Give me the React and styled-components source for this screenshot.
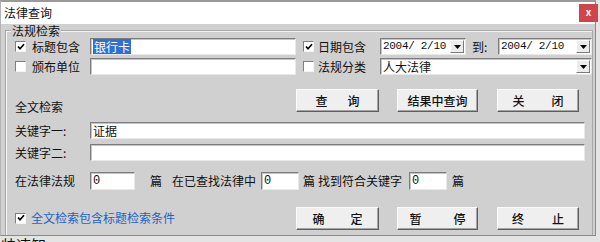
import React from 'react';
import styled, { createGlobalStyle } from 'styled-components';

const GlobalStyle = createGlobalStyle`
  html, body {
    margin: 0;
    padding: 0;
    background: #ffffff;
    width: 600px;
    height: 242px;
    overflow: hidden;
  }
  body {
    font-family: "Noto Sans CJK SC", "Noto Sans", sans-serif;
    font-size: 12px;
    color: #111;
  }
`;

const Page = styled.div`
  width: 600px;
  height: 242px;
  background: #e4e4e4;
  position: relative;
  overflow: hidden;
`;

const Window = styled.div`
  width: 596px;
  height: 236px;
  box-sizing: border-box;
  border-top: 2px solid #9a9a9a;
  border-left: 1px solid #b4b4b4;
  border-right: 1px solid #8a8a8a;
  border-bottom: 1px solid #8a8a8a;
  background: #d0d0d0;
  display: flex;
  flex-direction: column;
`;

const TitleBar = styled.div`
  height: 22px;
  flex: 0 0 22px;
  background: #fff;
  display: flex;
  align-items: center;
  justify-content: space-between;
  padding: 0 0 0 3px;
  font-size: 12px;
  line-height: 22px;
`;

const CloseButton = styled.div`
  width: 19px;
  height: 18px;
  margin-right: -3px;
  background: #d0454a;
  color: #fff;
  font-family: "Liberation Sans", sans-serif;
  font-size: 10px;
  font-weight: bold;
  display: flex;
  align-items: center;
  justify-content: center;
  line-height: 1;
`;

const Body = styled.div`
  flex: 1;
  padding: 6px 2px 0 4px;
  display: flex;
  flex-direction: column;
`;

const GroupBox = styled.div`
  border-top: 1px solid #a8a8a8;
  border-left: 1px solid #a8a8a8;
  border-right: 1px solid #a8a8a8;
  box-shadow: inset 1px 1px 0 #f4f4f4;
  flex: 1;
  padding: 0 0 0 9px;
  display: flex;
  flex-direction: column;
`;

const Legend = styled.div`
  margin: -7px 0 0 -4px;
  padding: 0 1px;
  align-self: flex-start;
  background: #d0d0d0;
  font-size: 12px;
  line-height: 14px;
  height: 14px;
`;

const Row = styled.div`
  display: flex;
  align-items: ${(p) => p.$align || 'center'};
  height: ${(p) => p.$h}px;
  margin-top: ${(p) => p.$mt || 0}px;
`;

const Label = styled.span`
  width: ${(p) => (p.$w ? `${p.$w}px` : 'auto')};
  margin-left: ${(p) => p.$ml || 0}px;
  flex: 0 0 auto;
  white-space: nowrap;
  color: ${(p) => p.$color || '#111'};
  font-size: 12px;
  line-height: 16px;
`;

const BottomLabel = styled(Label)`
  align-self: flex-end;
  line-height: 14px;
`;

const CheckBox = styled.span`
  width: 9px;
  height: 9px;
  flex: 0 0 auto;
  margin-left: ${(p) => p.$ml || 0}px;
  margin-right: ${(p) => p.$mr || 6}px;
  background: #fff;
  border-top: 1px solid #808080;
  border-left: 1px solid #808080;
  border-right: 1px solid #f4f4f4;
  border-bottom: 1px solid #f4f4f4;
  display: flex;
  align-items: center;
  justify-content: center;
`;

const Field = styled.div`
  box-sizing: border-box;
  width: ${(p) => p.$w}px;
  height: ${(p) => p.$h || 17}px;
  margin-left: ${(p) => p.$ml || 0}px;
  flex: 0 0 auto;
  background: #fff;
  border-top: 1px solid #7c7c7c;
  border-left: 1px solid #7c7c7c;
  border-right: 1px solid #e8e8e8;
  border-bottom: 1px solid #e8e8e8;
  box-shadow: inset 1px 1px 0 #c4c4c4;
  display: flex;
  align-items: center;
  padding-left: 2px;
  font-size: 12px;
  line-height: 15px;
  overflow: hidden;
`;

const Selected = styled.span`
  background: #2f6fd6;
  color: #fff;
  padding: 0 1px;
`;

const Digits = styled.span`
  font-family: "Liberation Mono", monospace;
  font-size: ${(p) => p.$size || 11}px;
  letter-spacing: -0.3px;
`;

const DropArrow = styled.span`
  margin-left: auto;
  width: 14px;
  height: 13px;
  margin-right: 1px;
  box-sizing: border-box;
  background: #ececec;
  border-top: 1px solid #fff;
  border-left: 1px solid #fff;
  border-right: 1px solid #7a7a7a;
  border-bottom: 1px solid #7a7a7a;
  display: flex;
  align-items: center;
  justify-content: center;
  flex: 0 0 auto;
`;

const Button = styled.div`
  box-sizing: border-box;
  width: ${(p) => p.$w}px;
  height: 23px;
  margin-left: ${(p) => p.$ml || 0}px;
  align-self: ${(p) => p.$self || 'center'};
  flex: 0 0 auto;
  background: #efefef;
  border-top: 1px solid #fbfbfb;
  border-left: 1px solid #fbfbfb;
  border-right: 1px solid #5e5e5e;
  border-bottom: 1px solid #5e5e5e;
  box-shadow: inset -1px -1px 0 #a4a4a4;
  display: flex;
  align-items: center;
  justify-content: center;
  gap: ${(p) => p.$gap || 0}px;
  font-size: 12px;
  font-weight: 500;
  color: #111;
`;

const Behind = styled.div`
  height: 6px;
  overflow: hidden;
  padding-left: 1px;
  font-size: 15px;
  line-height: 15px;
  color: #111;
`;

const BehindText = styled.div`
  margin-top: 1px;
`;

const Check = () => (
  <svg width="8" height="8" viewBox="0 0 8 8">
    <path d="M1 3.5 L3 5.8 L7 1.2" stroke="#000" strokeWidth="1.7" fill="none" />
  </svg>
);

const Arrow = () => (
  <svg width="7" height="4" viewBox="0 0 7 4">
    <path d="M0 0 H7 L3.5 4 Z" fill="#000" />
  </svg>
);

const Select = ({ w, ml, children }) => (
  <Field $w={w} $ml={ml}>
    {children}
    <DropArrow>
      <Arrow />
    </DropArrow>
  </Field>
);

export default function App() {
  return (
    <Page>
      <GlobalStyle />
      <Window>
        <TitleBar>
          <span>法律查询</span>
          <CloseButton>x</CloseButton>
        </TitleBar>
        <Body>
          <GroupBox>
            <Legend>法规检索</Legend>
            <Row $h={17}>
              <CheckBox>
                <Check />
              </CheckBox>
              <Label $w={58}>标题包含</Label>
              <Field $w={206}>
                <Selected>银行卡</Selected>
              </Field>
              <CheckBox $ml={7} $mr={4}>
                <Check />
              </CheckBox>
              <Label $w={62}>日期包含</Label>
              <Select w={86}>
                <Digits>2004/ 2/10</Digits>
              </Select>
              <Label $w={26} $ml={6}>到:</Label>
              <Select w={94}>
                <Digits>2004/ 2/10</Digits>
              </Select>
            </Row>
            <Row $h={17} $mt={3}>
              <CheckBox />
              <Label $w={58}>颁布单位</Label>
              <Field $w={206} />
              <CheckBox $ml={7} $mr={4} />
              <Label $w={62}>法规分类</Label>
              <Select w={212}>人大法律</Select>
            </Row>
            <Row $h={25} $mt={14} $align="flex-end">
              <BottomLabel $w={281}>全文检索</BottomLabel>
              <Button $w={83} $gap={20} $self="flex-start">
                <span>查</span>
                <span>询</span>
              </Button>
              <Button $w={81} $ml={18} $self="flex-start">
                结果中查询
              </Button>
              <Button $w={82} $ml={19} $gap={27} $self="flex-start">
                <span>关</span>
                <span>闭</span>
              </Button>
            </Row>
            <Row $h={17} $mt={8}>
              <Label $w={75}>关键字一:</Label>
              <Field $w={495}>证据</Field>
            </Row>
            <Row $h={17} $mt={5}>
              <Label $w={75}>关键字二:</Label>
              <Field $w={495} />
            </Row>
            <Row $h={18} $mt={11}>
              <Label $w={75}>在法律法规</Label>
              <Field $w={45} $h={18}>
                <Digits $size={12}>0</Digits>
              </Field>
              <Label $ml={15}>篇</Label>
              <Label $ml={10}>在已查找法律中</Label>
              <Field $w={38} $h={18} $ml={5}>
                <Digits $size={12}>0</Digits>
              </Field>
              <Label $ml={4}>篇</Label>
              <Label $ml={3}>找到符合关键字</Label>
              <Field $w={38} $h={18} $ml={7}>
                <Digits $size={12}>0</Digits>
              </Field>
              <Label $ml={5}>篇</Label>
            </Row>
            <Row $h={24} $mt={16}>
              <CheckBox $mr={5}>
                <Check />
              </CheckBox>
              <Label $w={265} $color="#1b63c6">全文检索包含标题检索条件</Label>
              <Button $w={83} $gap={26}>
                <span>确</span>
                <span>定</span>
              </Button>
              <Button $w={81} $ml={18} $gap={32}>
                <span>暂</span>
                <span>停</span>
              </Button>
              <Button $w={82} $ml={19} $gap={28}>
                <span>终</span>
                <span>止</span>
              </Button>
            </Row>
          </GroupBox>
        </Body>
      </Window>
      <Behind>
        <BehindText>帅速知</BehindText>
      </Behind>
    </Page>
  );
}
